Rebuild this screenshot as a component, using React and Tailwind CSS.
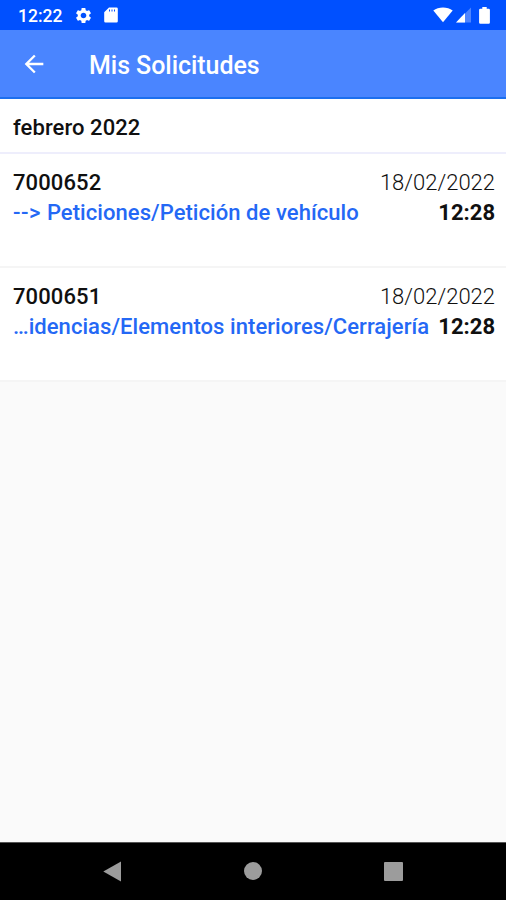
import { MdArrowBack, MdSettings } from 'react-icons/md'

const requests = [
  { id: '7000652', prefix: '-->', path: 'Peticiones/Petición de vehículo', date: '18/02/2022', time: '12:28' },
  { id: '7000651', path: '…idencias/Elementos interiores/Cerrajería', date: '18/02/2022', time: '12:28' }
]

const StatusBar = () => (
  <div className="h-[30px] shrink-0 bg-[#0050ff] text-white flex items-center pl-[18px] pr-[16px]">
    <span className="text-[17.5px] leading-[30px] font-medium pt-[2px]">12:22</span>
    <MdSettings className="w-[19px] h-[19px] ml-[12px]" />
    <svg className="w-[14px] h-[16px] ml-[11px]" viewBox="0 0 14 16" fill="currentColor">
      <path
        fillRule="evenodd"
        d="M5 0.5h7.5a1.3 1.3 0 0 1 1.3 1.3v12.4a1.3 1.3 0 0 1-1.3 1.3h-11A1.3 1.3 0 0 1 0.2 14.2V5.3zM5 2.6v1.8h1V2.6zM7.5 2.6v1.8h1V2.6zM10 2.6v1.8h1V2.6z"
      />
    </svg>
    <div className="ml-auto flex items-center">
      <svg className="w-[20px] h-[16px]" viewBox="0 0 20 16" fill="currentColor">
        <path d="M10 15.3 0.3 3.6C3 1.7 6.3 0.6 10 0.6s7 1.1 9.7 3z" />
      </svg>
      <svg className="w-[15px] h-[16px] ml-[3px]" viewBox="0 0 15 16" fill="currentColor">
        <path d="M15 0.5v15H0z" fillOpacity="0.3" />
        <path d="M9 6v9.500H0z" />
      </svg>
      <svg className="w-[11px] h-[17px] ml-[8px]" viewBox="0 0 11 17" fill="currentColor">
        <path d="M3.3 0h4.4v1.7h2a1.2 1.2 0 0 1 1.2 1.2v12.7a1.2 1.2 0 0 1-1.2 1.2H1.3a1.2 1.2 0 0 1-1.2-1.2V2.9a1.2 1.2 0 0 1 1.2-1.2h2z" />
      </svg>
    </div>
  </div>
)

const AppBar = () => (
  <header className="h-[69px] shrink-0 bg-[#4a85ff] border-b-2 border-[#1c6fee] text-white flex items-center pl-[20px]">
    <MdArrowBack className="w-[28px] h-[28px]" />
    <h1 className="ml-[41px] pt-[4px] text-[25px] tracking-[-0.05px] font-medium">Mis Solicitudes</h1>
  </header>
)

const RequestRow = ({ request }) => (
  <li className="h-[114px] bg-white border-b-2 border-[#f5f5f5] pt-[14px] pl-[13px] pr-[11px] text-[22px]">
    <div className="flex justify-between leading-[30px]">
      <span className="font-medium tracking-[0.12px]">{request.id}</span>
      <span className="font-light">{request.date}</span>
    </div>
    <div className="flex justify-between whitespace-nowrap leading-[29px]">
      <span className="font-medium tracking-[0.06px] text-[#2468f5]">
        {request.prefix && <span className="mr-[6px] tracking-[0.5px]">{request.prefix}</span>}
        {request.path}
      </span>
      <span className="font-bold">{request.time}</span>
    </div>
  </li>
)

const NavBar = () => (
  <nav className="h-[58px] shrink-0 bg-black border-t border-[#555] flex items-center justify-between px-[103px] pb-px">
    <svg className="w-[19px] h-[21px]" viewBox="0 0 19 21" fill="#9c9c9c">
      <path d="M0.3 10.5 18 0.5v20z" />
    </svg>
    <div className="w-[18px] h-[18px] rounded-full bg-[#9c9c9c]"></div>
    <div className="w-[19px] h-[19px] rounded-[1px] bg-[#9c9c9c]"></div>
  </nav>
)

const App = () => {
  return (
    <div className="h-screen w-full flex flex-col overflow-hidden bg-[#fafafa] text-[#101010] font-['Roboto',sans-serif]">
      <StatusBar />
      <AppBar />
      <main className="flex-1">
        <h2 className="h-[56px] bg-white border-b-[3px] border-[#eeeefc] pl-[13px] pt-[2px] text-[22px] tracking-[0.08px] leading-[54px] font-medium">
          febrero 2022
        </h2>
        <ul className="-mt-px">
          {requests.map((request) => (
            <RequestRow key={request.id} request={request} />
          ))}
        </ul>
      </main>
      <NavBar />
    </div>
  )
}

export default App
